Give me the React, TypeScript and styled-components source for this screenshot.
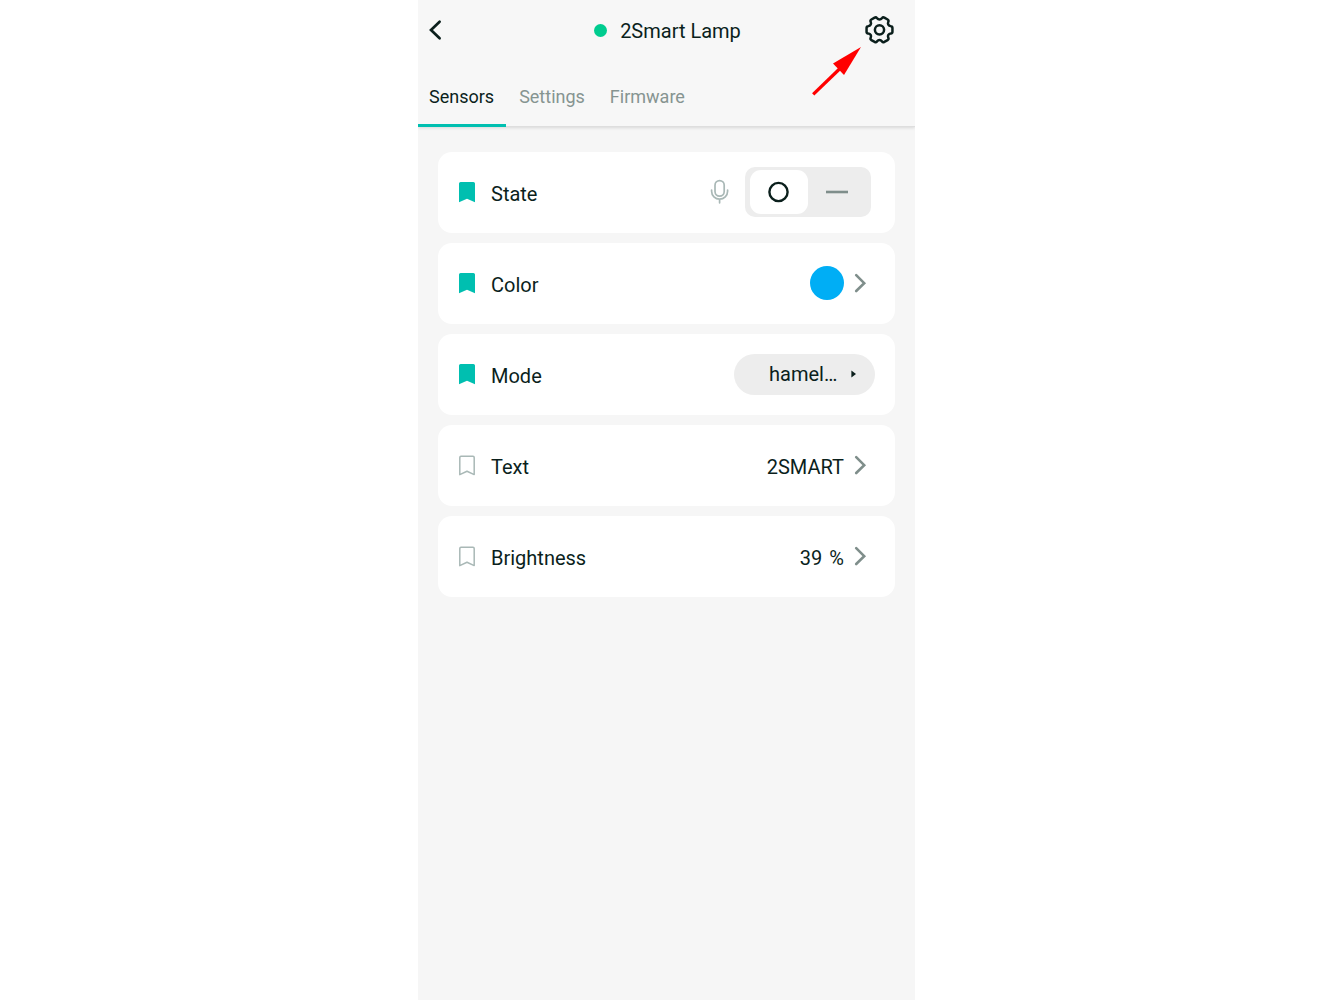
import React, { useState } from "react";
import styled, { createGlobalStyle } from "styled-components";

const ink = "#0b1f1c";
const muted = "#869491";
const teal = "#00bfb0";
const surface = "#f6f6f6";
const control = "#ededed";

const GlobalStyle = createGlobalStyle`
  *, *::before, *::after { box-sizing: border-box; }
  body { margin: 0; background: #ffffff; }
  button, select, input { font: inherit; color: inherit; }
`;

const Screen = styled.div`
  display: flex;
  flex-direction: column;
  max-width: 497px;
  min-height: 100vh;
  margin: 0 auto;
  background: ${surface};
  color: ${ink};
  font-family: Roboto, "Noto Sans", sans-serif;
  font-size: 20px;
  line-height: 24px;
`;

const Header = styled.header`
  position: relative;
  background: #f7f7f7;
  box-shadow: 0 1px 0 #dedede, 0 2px 3px rgba(0, 0, 0, 0.12);
  clip-path: inset(0 0 -6px 0);
`;

const TitleBar = styled.div`
  display: grid;
  grid-template-columns: 48px 1fr 48px;
  align-items: center;
  height: 60px;
  padding-right: 12px;
`;

const IconButton = styled.button<{ $align?: string }>`
  display: flex;
  align-items: center;
  justify-content: ${(p) => p.$align || "center"};
  height: 48px;
  padding: 0 8px;
  border: 0;
  background: none;
  cursor: pointer;
`;

const Title = styled.h1`
  display: flex;
  align-items: center;
  justify-content: center;
  gap: 13px;
  margin: 0;
  padding-left: 14px;
  font-size: 20px;
  font-weight: 400;
`;

const TitleText = styled.span`
  padding-top: 2px;
`;

const StatusDot = styled.span`
  width: 13px;
  height: 13px;
  border-radius: 50%;
  background: #00cc8f;
`;

const Tabs = styled.nav`
  display: flex;
  gap: 2px;
  height: 66px;
`;

const Tab = styled.button<{ $active: boolean }>`
  position: relative;
  padding: 8px 12px 0 11px;
  border: 0;
  background: none;
  color: ${(p) => (p.$active ? ink : muted)};
  font-size: 18px;
  cursor: pointer;

  &::after {
    content: "";
    position: absolute;
    inset: auto 0 -1px 0;
    height: 3px;
    background: ${(p) => (p.$active ? teal : "transparent")};
  }
`;

const Callout = styled.svg`
  position: absolute;
  top: 46px;
  right: 53px;
  pointer-events: none;
`;

const SensorList = styled.ul`
  display: flex;
  flex-direction: column;
  gap: 10px;
  margin: 0;
  padding: 26px 20px;
  list-style: none;
`;

const Card = styled.li<{ $end?: number }>`
  display: flex;
  align-items: center;
  height: 81px;
  padding: 0 ${(p) => p.$end ?? 20}px 1px 20px;
  border-radius: 14px;
  background: #ffffff;
`;

const Bookmark = styled.button`
  display: flex;
  margin-right: 15px;
  padding: 0;
  border: 0;
  background: none;
  cursor: pointer;
`;

const Label = styled.span`
  flex: 1;
  padding-top: 3px;
`;

const ValueButton = styled.button`
  display: flex;
  align-items: center;
  gap: 8px;
  height: 48px;
  padding: 0;
  border: 0;
  background: none;
  cursor: pointer;
`;

const Reading = styled.span`
  display: flex;
  gap: 7px;
  padding-top: 3px;
`;

const Swatch = styled.span`
  width: 34px;
  height: 34px;
  border-radius: 50%;
  background: #00aef5;
`;

const MicIcon = styled.svg`
  margin-right: 15px;
`;

const Segmented = styled.fieldset`
  display: flex;
  height: 50px;
  margin: 0;
  padding: 3px 5px;
  border: 0;
  border-radius: 10px;
  background: ${control};
`;

const Segment = styled.label<{ $on: boolean }>`
  display: flex;
  align-items: center;
  justify-content: center;
  width: 58px;
  border-radius: 11px;
  background: ${(p) => (p.$on ? "#ffffff" : "transparent")};
  cursor: pointer;
`;

const HiddenRadio = styled.input`
  position: absolute;
  appearance: none;
  width: 1px;
  height: 1px;
  margin: 0;
  opacity: 0;
`;

const Picker = styled.div`
  display: grid;
  align-items: center;
  width: 141px;

  & > * { grid-area: 1 / 1; }
`;

const PickerSelect = styled.select`
  width: 100%;
  height: 41px;
  padding: 0 24px 1px 35px;
  border: 0;
  border-radius: 21px;
  background: ${control};
  appearance: none;
  cursor: pointer;
`;

const PickerArrow = styled.svg`
  justify-self: end;
  margin-right: 18px;
  pointer-events: none;
`;

/* Closed outline of a six-toothed cog with rounded corners. */
function cogPath(cx: number, cy: number) {
  const points: number[][] = [];
  for (let tooth = 0; tooth < 6; tooth++) {
    [[-22, 10.3], [-15, 13.4], [15, 13.4], [22, 10.3]].forEach(([offset, radius]) => {
      const angle = ((tooth * 60 + offset) * Math.PI) / 180;
      points.push([cx + radius * Math.cos(angle), cy + radius * Math.sin(angle)]);
    });
  }
  const toward = (from: number[], to: number[], distance: number) => {
    const length = Math.hypot(to[0] - from[0], to[1] - from[1]);
    const t = Math.min(0.5, distance / length);
    return [from[0] + (to[0] - from[0]) * t, from[1] + (to[1] - from[1]) * t]
      .map((n) => n.toFixed(2))
      .join(" ");
  };
  return (
    points
      .map((point, i) => {
        const previous = points[(i + points.length - 1) % points.length];
        const next = points[(i + 1) % points.length];
        return `${i ? "L" : "M"}${toward(point, previous, 1.6)}Q${point[0].toFixed(2)} ${point[1].toFixed(2)} ${toward(point, next, 1.6)}`;
      })
      .join("") + "Z"
  );
}

const Cog = () => (
  <svg width="30" height="30" viewBox="0 0 30 30" fill="none" stroke={ink} strokeWidth="2.5" aria-hidden="true">
    <path d={cogPath(15.5, 14.8)} />
    <circle cx="15.5" cy="14.8" r="4.6" />
  </svg>
);

const Chevron = () => (
  <svg width="15" height="20" viewBox="0 0 15 20" fill="none" stroke="#7f8e8b" strokeWidth="2.6" strokeLinecap="round" aria-hidden="true">
    <path d="M4.2 2.2l8 8L4.2 18" />
  </svg>
);

function BookmarkToggle({ name, initial }: { name: string; initial: boolean }) {
  const [saved, setSaved] = useState(initial);
  return (
    <Bookmark type="button" aria-label={`Bookmark ${name}`} aria-pressed={saved} onClick={() => setSaved(!saved)}>
      <svg width="18" height="22" viewBox="0 0 18 22" aria-hidden="true">
        {saved ? (
          <path d="M1 21.2V2.5Q1 .9 2.6 .9H15.4Q17 .9 17 2.5V21.2L9 17.8Z" fill={teal} />
        ) : (
          <path d="M1.8 20.6V3.4Q1.8 2.2 3 2.2H15Q16.2 2.2 16.2 3.4V20.6L9 17.2Z" fill="none" stroke="#a9b8b6" strokeWidth="1.5" strokeLinejoin="round" />
        )}
      </svg>
    </Bookmark>
  );
}

export default function App() {
  const [tab, setTab] = useState("Sensors");
  const [on, setOn] = useState(false);

  return (
    <Screen>
      <GlobalStyle />
      <Header>
        <TitleBar>
          <IconButton type="button" aria-label="Back" $align="flex-start">
            <svg width="18" height="22" viewBox="0 0 18 22" fill="none" stroke={ink} strokeWidth="2.7" strokeLinecap="round" aria-hidden="true">
              <path d="M13.6 2.8L5 11l8.6 8.2" />
            </svg>
          </IconButton>
          <Title>
            <StatusDot />
            <TitleText>2Smart Lamp</TitleText>
          </Title>
          <IconButton type="button" aria-label="Device settings">
            <Cog />
          </IconButton>
        </TitleBar>
        <Tabs>
          {["Sensors", "Settings", "Firmware"].map((name) => (
            <Tab key={name} type="button" $active={tab === name} onClick={() => setTab(name)}>
              {name}
            </Tab>
          ))}
        </Tabs>
        <Callout width="50" height="50" viewBox="0 0 50 50" aria-hidden="true">
          <path d="M1.2 48.4L28 22.5" stroke="#ff0000" strokeWidth="3.3" />
          <path d="M49 1L21 17.5L32 29Z" fill="#ff0000" />
        </Callout>
      </Header>

      <SensorList>
        <Card $end={24}>
          <BookmarkToggle name="State" initial />
          <Label>State</Label>
          <MicIcon width="20" height="26" viewBox="0 0 20 26" fill="none" stroke="#a9b8b6" strokeWidth="1.7" strokeLinecap="round" aria-hidden="true">
            <rect x="5" y="1.6" width="9.2" height="15.6" rx="4.6" />
            <path d="M1.6 11v1.2a8 8 0 0 0 16 0V11M9.6 20.4v3.4" />
          </MicIcon>
          <Segmented aria-label="State">
            <Segment $on={!on}>
              <HiddenRadio type="radio" name="state" aria-label="Off" checked={!on} onChange={() => setOn(false)} />
              <svg width="22" height="22" viewBox="0 0 22 22" fill="none" stroke={ink} strokeWidth="2.4" aria-hidden="true">
                <circle cx="10.5" cy="11" r="9.1" />
              </svg>
            </Segment>
            <Segment $on={on}>
              <HiddenRadio type="radio" name="state" aria-label="On" checked={on} onChange={() => setOn(true)} />
              <svg width="22" height="22" viewBox="0 0 22 22" stroke="#7f8e8b" strokeWidth="2.6" aria-hidden="true">
                <path d="M0 11h22" />
              </svg>
            </Segment>
          </Segmented>
        </Card>

        <Card $end={28}>
          <BookmarkToggle name="Color" initial />
          <Label>Color</Label>
          <ValueButton type="button" aria-label="Choose color">
            <Swatch />
            <Chevron />
          </ValueButton>
        </Card>

        <Card>
          <BookmarkToggle name="Mode" initial />
          <Label as="label" htmlFor="mode">Mode</Label>
          <Picker>
            <PickerSelect id="mode" defaultValue="hamel">
              <option value="hamel">hamel…</option>
            </PickerSelect>
            <PickerArrow width="6" height="8" viewBox="0 0 6 8" aria-hidden="true">
              <path d="M.4 .5L5 4L.4 7.5Z" fill={ink} />
            </PickerArrow>
          </Picker>
        </Card>

        <Card $end={28}>
          <BookmarkToggle name="Text" initial={false} />
          <Label>Text</Label>
          <ValueButton type="button">
            <Reading>2SMART</Reading>
            <Chevron />
          </ValueButton>
        </Card>

        <Card $end={28}>
          <BookmarkToggle name="Brightness" initial={false} />
          <Label>Brightness</Label>
          <ValueButton type="button">
            <Reading>
              <span>39</span>
              <span>%</span>
            </Reading>
            <Chevron />
          </ValueButton>
        </Card>
      </SensorList>
    </Screen>
  );
}
